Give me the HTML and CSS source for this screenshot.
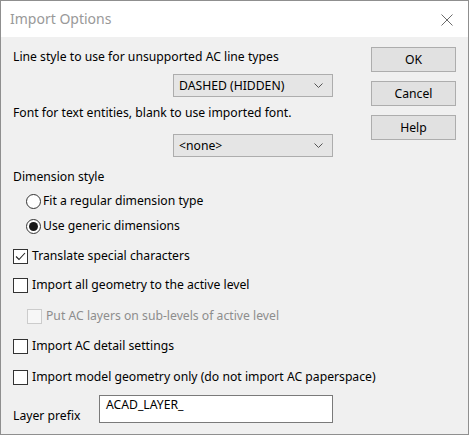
FILE: index.html
```html
<!DOCTYPE html>
<html lang="en">
  <head>
    <meta charset="UTF-8" />
    <title>Import Options</title>
    <link rel="stylesheet" href="styles.css">
  </head>
  <body>
    <div class="window">
      <div class="titlebar">
        <span class="title">Import Options</span>
        <svg class="close" width="12" height="12" viewBox="0 0 12 12">
          <path d="M0.5 0.5 L11.5 11.5 M11.5 0.5 L0.5 11.5" stroke="#6b6b6b" stroke-width="1" fill="none" />
        </svg>
      </div>

      <div class="content">
        <div class="main">
          <div class="row r-line">Line style to use for unsupported AC line types</div>
          <div class="select s-line">
            <span>DASHED (HIDDEN)</span>
            <svg width="9" height="5" viewBox="0 0 9 5"><path d="M0.5 0.5 L4.5 4.5 L8.5 0.5" stroke="#555" fill="none" /></svg>
          </div>

          <div class="row r-font">Font for text entities, blank to use imported font.</div>
          <div class="select s-font">
            <span>&lt;none&gt;</span>
            <svg width="9" height="5" viewBox="0 0 9 5"><path d="M0.5 0.5 L4.5 4.5 L8.5 0.5" stroke="#555" fill="none" /></svg>
          </div>

          <div class="row r-dim">Dimension style</div>
          <div class="row r-radio1 opt indent">
            <span class="radio"></span>Fit a regular dimension type
          </div>
          <div class="row r-radio2 opt indent">
            <span class="radio on"></span>Use generic dimensions
          </div>

          <!-- checkboxes -->
          <div class="row r-trans opt">
            <span class="check">
              <svg width="13" height="13" viewBox="0 0 13 13"><path d="M2 6.5 L5 9.5 L11 3" stroke="#222" stroke-width="1.1" fill="none" /></svg>
            </span>Translate special characters
          </div>
          <div class="row r-all opt"><span class="check"></span>Import all geometry to the active level</div>
          <div class="row r-sub opt indent disabled"><span class="check"></span>Put AC layers on sub-levels of active level</div>
          <div class="row r-detail opt"><span class="check"></span>Import AC detail settings</div>
          <div class="row r-model opt"><span class="check"></span>Import model geometry only (do not import AC paperspace)</div>

          <div class="prefix">
            <span class="prefix-label">Layer prefix</span>
            <div class="edit">ACAD_LAYER_</div>
          </div>
        </div>

        <div class="buttons">
          <div class="btn">OK</div>
          <div class="btn">Cancel</div>
          <div class="btn">Help</div>
        </div>
      </div>
    </div>
  </body>
</html>
```

FILE: styles.css
```css
* {
  box-sizing: border-box;
  font-family: "Noto Sans", "Open Sans", sans-serif;
}

body {
  margin: 0;
  background: #f0f0f0;
}

.window {
  width: 469px;
  height: 435px;
  border: 1px solid #8f8f8f;
  background: #f0f0f0;
  color: #000;
  font-size: 12.2px;
}

.titlebar {
  height: 36px;
  background: #fff;
  display: flex;
  align-items: center;
  justify-content: space-between;
  padding: 0 15px 0 9px;
}

.title {
  font-size: 14px;
  color: #999;
  margin-top: -1px;
}

.close {
  margin-top: 1px;
}

.content {
  display: flex;
  padding-left: 12px;
}

.main {
  width: 358px;
  flex-shrink: 0;
}

.row {
  height: 20px;
  line-height: 20px;
  white-space: nowrap;
}

.r-line { margin-top: 10px; }
.r-font { margin-top: 6px; }
.r-dim { margin-top: 10px; }
.r-radio1 { margin-top: 4px; }
.r-radio2 { margin-top: 5px; }
.r-trans { margin-top: 10px; }
.r-all { margin-top: 9px; }
.r-sub { margin-top: 11px; }
.r-detail { margin-top: 10px; }
.r-model { margin-top: 11px; }

.select {
  width: 160px;
  height: 23px;
  margin-left: 160px;
  background: #e5e5e5;
  border: 1px solid #adadad;
  display: flex;
  align-items: center;
  justify-content: space-between;
  padding: 0 9px 0 5px;
}

.s-line { margin-top: 7px; }
.s-font { margin-top: 11px; }

.opt {
  display: flex;
  align-items: center;
}

.indent {
  padding-left: 13px;
}

.radio {
  flex-shrink: 0;
  width: 15px;
  height: 15px;
  border: 1px solid #333;
  border-radius: 50%;
  background: #fff;
  margin-right: 2px;
  display: flex;
  align-items: center;
  justify-content: center;
}

.radio.on::after {
  content: "";
  width: 9px;
  height: 9px;
  border-radius: 50%;
  background: #1a1a1a;
}

.check {
  flex-shrink: 0;
  width: 15px;
  height: 15px;
  border: 1px solid #333;
  background: #fff;
  margin-right: 4px;
  display: flex;
  align-items: center;
  justify-content: center;
}

.disabled {
  color: #8d8d8d;
  padding-left: 14px;
}

.disabled .check {
  border-color: #cccccc;
  background: #f7f7f7;
}

.prefix {
  display: flex;
  margin-top: 8px;
}

.prefix-label {
  width: 86px;
  margin-top: 11px;
  line-height: 20px;
}

.edit {
  width: 234px;
  height: 28px;
  border: 1px solid #7a7a7a;
  background: #fff;
  padding: 0 6px;
  line-height: 18px;
}

.buttons {
  margin-top: 10px;
  display: flex;
  flex-direction: column;
  gap: 9px;
}

.btn {
  width: 85px;
  height: 25px;
  background: #e1e1e1;
  border: 1px solid #adadad;
  display: flex;
  align-items: center;
  justify-content: center;
}
```
